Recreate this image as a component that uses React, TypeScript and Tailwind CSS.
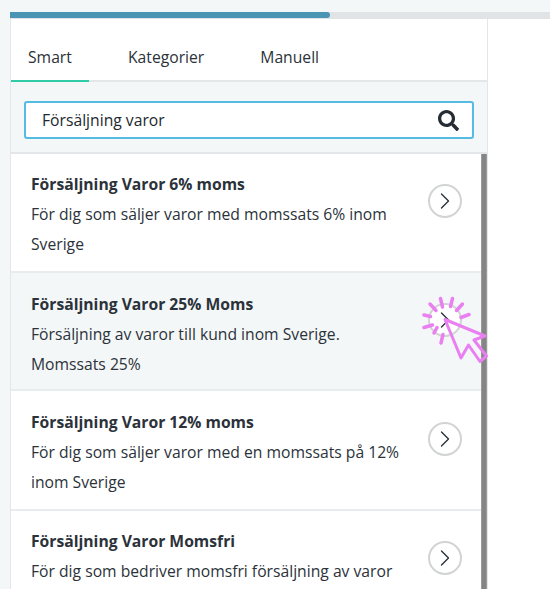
import React from 'react';
import { ChevronRight } from 'lucide-react';
import { FaSearch } from 'react-icons/fa';

const items = [
  {
    title: 'Försäljning Varor 6% moms',
    lines: ['För dig som säljer varor med momssats 6% inom', 'Sverige'],
    box: 'h-[119px] pt-[15px] bg-white',
    circle: 'mt-[15px]',
  },
  {
    title: 'Försäljning Varor 25% Moms',
    lines: ['Försäljning av varor till kund inom Sverige.', 'Momssats 25%'],
    box: 'h-[118px] pt-[16px] bg-[#f4f7f8]',
    circle: 'mt-[14px]',
  },
  {
    title: 'Försäljning Varor 12% moms',
    lines: ['För dig som säljer varor med en momssats på 12%', 'inom Sverige'],
    box: 'h-[120px] pt-[16px] bg-white',
    circle: 'mt-[15px]',
  },
  {
    title: 'Försäljning Varor Momsfri',
    lines: ['För dig som bedriver momsfri försäljning av varor'],
    box: 'h-[78px] pt-[15px] bg-white',
    circle: 'mt-[15px]',
  },
];

const rays = [
  [24, 35, 30.5, 36.5],
  [30, 24, 36, 30.5],
  [40.5, 18.5, 42.5, 27],
  [52.5, 18.5, 50.5, 26.5],
  [62.5, 24, 56.5, 30.5],
  [69, 34.5, 61, 37.5],
  [24, 47.5, 32.5, 45],
  [34, 53, 37, 47.5],
  [41, 63, 43, 54.5],
];

const App: React.FC = () => {
  return (
    <div className="relative flex h-[589px] w-[550px] flex-col overflow-hidden bg-white font-['Open_Sans',sans-serif] text-[15.7px] text-[#2b323a]">
      {/* Progress */}
      <div className="bg-[#f4f7f8] pt-3 pl-[10px]">
        <div className="h-[7px] bg-[#e0e4e6]">
          <div className="h-[6px] w-[320px] rounded-r-sm bg-[#4a95b4]"></div>
        </div>
      </div>

      <div className="flex min-h-0 flex-1">
        <div className="w-[10px] bg-[#f4f7f8]"></div>
        <div className="flex w-[478px] flex-col border-x border-[#e3e7ea]">
          {/* Tabs */}
          <div className="flex h-[63px] items-end border-b-2 border-[#e3e7ea]">
            <div className="-mb-[2px] flex h-[61px] w-[78px] items-center border-b-2 border-[#2fcba6] pt-[15px] pl-[17px]">Smart</div>
            <div className="flex h-[59px] items-center pt-[15px] pl-[39px]">Kategorier</div>
            <div className="flex h-[59px] items-center pt-[15px] pl-[56px]">Manuell</div>
          </div>

          {/* Search */}
          <div className="border-b-2 border-[#e3e7ea] bg-[#f4f7f8] px-[13px] pt-[19px] pb-[13px]">
            <div className="flex h-[38px] w-[450px] items-center justify-between rounded-[3px] border-2 border-[#56bbe2] bg-white pr-[13px] pl-[16px] text-[#22282e]">
              <span className="pt-[2px]">Försäljning varor</span>
              <FaSearch size={21} className="text-[#252c33]" />
            </div>
          </div>

          {/* Results */}
          <div className="flex min-h-0 flex-1">
            <div className="min-w-0 flex-1 overflow-hidden">
              {items.map((item, i) => (
                <div
                  key={item.title}
                  className={`flex items-start justify-between pr-[18px] pl-[20px] ${i < items.length - 1 ? 'border-b-2 border-[#e9ecee]' : ''} ${item.box}`}
                >
                  <div className="leading-[30px] whitespace-nowrap">
                    <div className="font-bold">{item.title}</div>
                    {item.lines.map((line) => (
                      <div key={line}>{line}</div>
                    ))}
                  </div>
                  <div className={`mr-px flex h-[34px] w-[34px] items-center justify-center rounded-full border-2 border-[#d2d4d4] bg-white ${item.circle}`}>
                    <ChevronRight size={28} strokeWidth={1.2} className="text-[#2b323a]" />
                  </div>
                </div>
              ))}
            </div>
            <div className="w-[6px] border-x border-[#9b9b9b] bg-[#858585]"></div>
          </div>
        </div>
      </div>

      {/* Cursor highlight */}
      <svg className="absolute top-[280px] left-[400px]" width="100" height="100" viewBox="0 0 100 100" fill="none">
        {rays.map(([x1, y1, x2, y2]) => (
          <line key={`${x1}-${y1}`} x1={x1} y1={y1} x2={x2} y2={y2} stroke="#ea7ff2" strokeWidth="3.5" strokeLinecap="round" />
        ))}
        <path
          d="M45 39.5 L85 56 L74 60 L86.5 76 L80 81.5 L68.5 65 L61 78 Z"
          stroke="#ea7ff2"
          strokeWidth="3"
          strokeLinejoin="round"
          fill="none"
        />
      </svg>
    </div>
  );
};

export default App;
